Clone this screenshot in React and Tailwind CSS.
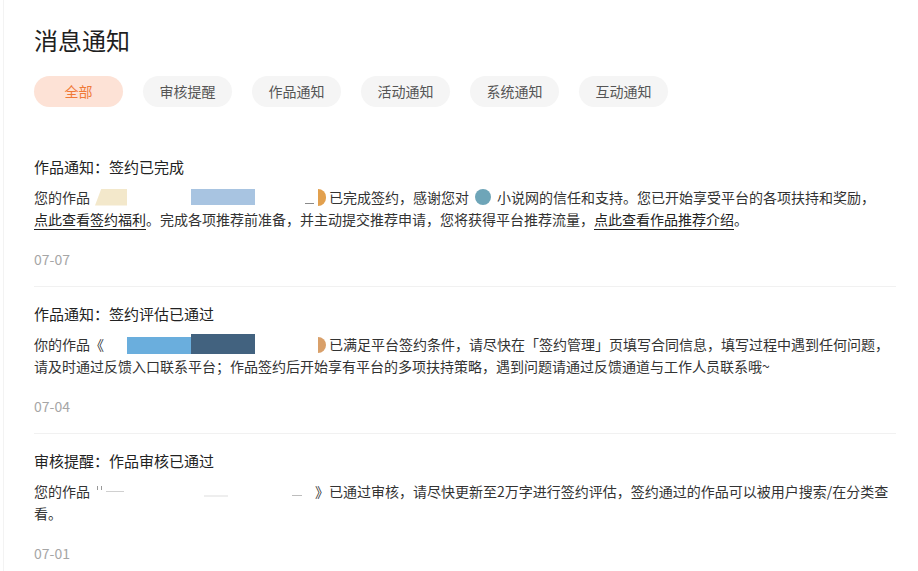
import React from "react";

const font = { fontFamily: '"Noto Sans CJK SC", "Noto Sans", sans-serif' };

const tabs = ["全部", "审核提醒", "作品通知", "活动通知", "系统通知", "互动通知"];

function Gap1() {
  return (
    <span className="inline-flex h-[22px] w-[239px] items-center align-top">
      <span className="w-[5px]" />
      <span className="h-[17px] w-[32px] bg-[#f3e8cb] [clip-path:polygon(20%_0,100%_0,100%_100%,0_100%)]" />
      <span className="w-[64px]" />
      <span className="h-[16px] w-[64px] bg-[#a8c4e1]" />
      <span className="w-[50px]" />
      <span className="mt-[12px] h-[1px] w-[9px] bg-[#8a8a8a]" />
      <span className="w-[4px]" />
      <span className="h-[17px] w-[8px] rounded-r-full bg-[#e2a04e]" />
      <span className="w-[3px]" />
    </span>
  );
}

function Gap2() {
  return (
    <span className="inline-flex h-[22px] w-[225px] items-center align-top">
      <span className="w-[23px]" />
      <span className="mt-[2px] h-[17px] w-[64px] bg-[#6aaedd]" />
      <span className="h-[20px] w-[64px] bg-[#42627f]" />
      <span className="w-[63px]" />
      <span className="mt-[2px] h-[16px] w-[8px] rounded-r-full bg-[#d9a06a]" />
      <span className="w-[3px]" />
    </span>
  );
}

function Gap3() {
  return (
    <span className="inline-flex h-[22px] w-[225px] items-center align-top">
      <span className="w-[7px]" />
      <span className="mb-[6px] h-[4px] w-[5px] border-x border-[#999]" />
      <span className="w-[4px]" />
      <span className="h-[1px] w-[18px] bg-[#d0d0d0]" />
      <span className="w-[80px]" />
      <span className="mt-[10px] h-[2px] w-[24px] bg-[#eeeeee]" />
      <span className="w-[64px]" />
      <span className="mt-[8px] h-[1px] w-[10px] bg-[#bdbdbd]" />
    </span>
  );
}

function Blob() {
  return (
    <span className="inline-flex h-[22px] w-[28px] items-center justify-center align-top">
      <span className="h-[16px] w-[16px] rounded-full bg-[#6ea5b8]" />
    </span>
  );
}

function Item({ title, date, children, last }) {
  return (
    <div className={last ? "pt-[16px] pb-[17px]" : "border-b border-[#f1f1f1] pt-[16px] pb-[17px]"}>
      <div className="text-[15px] leading-[22px] text-[#222]">{title}</div>
      <div className="mt-[8px] text-[14px] leading-[22px] text-[#333]">{children}</div>
      <div className="mt-[19px] text-[14px] leading-[20px] text-[#a6a6a6]">{date}</div>
    </div>
  );
}

export default function App() {
  return (
    <div style={font} className="min-h-[571px] w-[918px] bg-white pl-[3px]">
      <div className="min-h-[571px] border-l border-[#f3f3f3] pl-[30px]">
        <div className="w-[862px]">
          <h1 className="pt-[24px] text-[24px] font-normal leading-[32px] text-[#1f1f1f]">消息通知</h1>
          <div className="mt-[20px] flex gap-[20px]">
            {tabs.map((t, i) => (
              <div
                key={t}
                className={
                  i === 0
                    ? "flex h-[31px] w-[89px] items-center justify-center rounded-full bg-[#fde2d6] text-[14px] text-[#f07a38]"
                    : "flex h-[31px] w-[89px] items-center justify-center rounded-full bg-[#f5f5f5] text-[14px] text-[#555]"
                }
              >
                {t}
              </div>
            ))}
          </div>

          <div className="mt-[33px]">
            <Item title="作品通知：签约已完成" date="07-07">
              <span className="whitespace-nowrap">
                您的作品<Gap1 />已完成签约，感谢您对<Blob />小说网的信任和支持。您已开始享受平台的各项扶持和奖励，
              </span>
              <br />
              <span className="text-[#222] underline decoration-[#222] underline-offset-[4px]">点此查看签约福利</span>
              。完成各项推荐前准备，并主动提交推荐申请，您将获得平台推荐流量，
              <span className="text-[#222] underline decoration-[#222] underline-offset-[4px]">点此查看作品推荐介绍</span>。
            </Item>
            <Item title="作品通知：签约评估已通过" date="07-04">
              <span className="whitespace-nowrap">
                你的作品《<Gap2 />已满足平台签约条件，请尽快在「签约管理」页填写合同信息，填写过程中遇到任何问题，
              </span>
              <br />
              请及时通过反馈入口联系平台；作品签约后开始享有平台的多项扶持策略，遇到问题请通过反馈通道与工作人员联系哦~
            </Item>
            <Item title="审核提醒：作品审核已通过" date="07-01" last>
              <span className="whitespace-nowrap">
                您的作品<Gap3 />》已通过审核，请尽快更新至2万字进行签约评估，签约通过的作品可以被用户搜索/在分类查
              </span>
              <br />
              看。
            </Item>
          </div>
        </div>
      </div>
    </div>
  );
}
